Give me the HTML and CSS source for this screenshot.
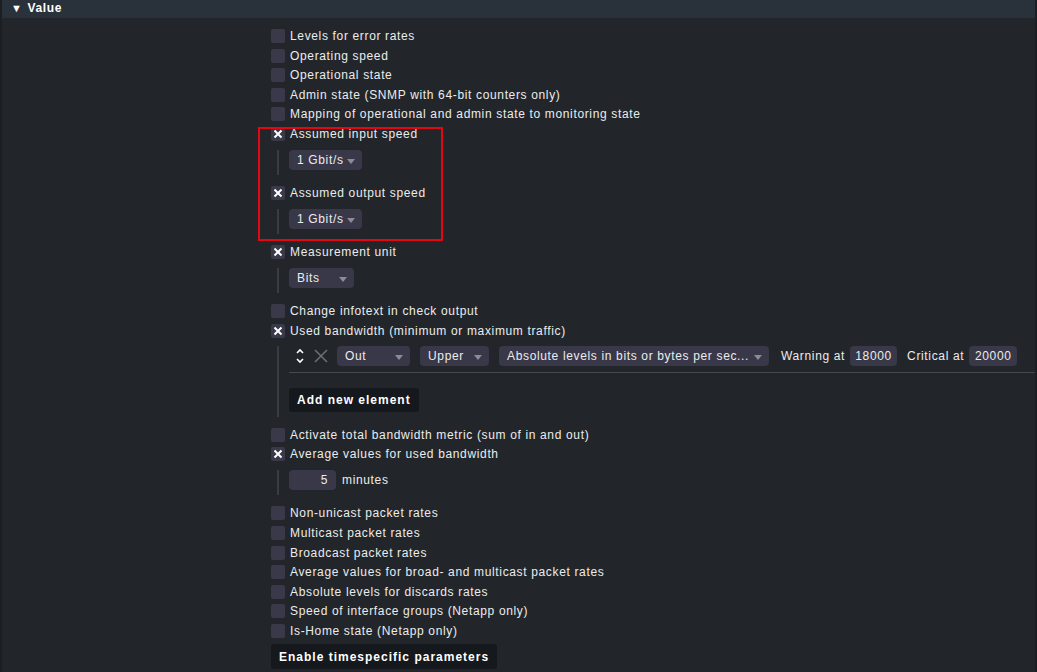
FILE: index.html
```html
<!DOCTYPE html>
<html lang="en">
<head>
<meta charset="UTF-8">
<meta name="viewport" content="width=device-width, initial-scale=1.0">
<title>Value</title>
<link rel="stylesheet" href="styles.css">
</head>
<body>
<div id="page">
    <div class="section-head"><span class="tri">&#9660;</span>Value</div>

    <div id="value-form">
        <div class="row"><span class="cb"></span>Levels for error rates</div>
        <div class="row"><span class="cb"></span>Operating speed</div>
        <div class="row"><span class="cb"></span>Operational state</div>
        <div class="row"><span class="cb"></span>Admin state (SNMP with 64-bit counters only)</div>
        <div class="row"><span class="cb"></span>Mapping of operational and admin state to monitoring state</div>

        <div class="row"><span class="cb on"><svg viewBox="0 0 14 14"><path d="M3.5 3.5 L10.5 10.5 M10.5 3.5 L3.5 10.5"/></svg></span>Assumed input speed</div>
        <div class="sub">
            <div class="sub-inner">
                <div class="select w73">1 Gbit/s<span class="arrow"></span></div>
            </div>
        </div>

        <div class="row"><span class="cb on"><svg viewBox="0 0 14 14"><path d="M3.5 3.5 L10.5 10.5 M10.5 3.5 L3.5 10.5"/></svg></span>Assumed output speed</div>
        <div class="sub">
            <div class="sub-inner">
                <div class="select w73">1 Gbit/s<span class="arrow"></span></div>
            </div>
        </div>

        <div class="row"><span class="cb on"><svg viewBox="0 0 14 14"><path d="M3.5 3.5 L10.5 10.5 M10.5 3.5 L3.5 10.5"/></svg></span>Measurement unit</div>
        <div class="sub">
            <div class="sub-inner">
                <div class="select w65">Bits<span class="arrow"></span></div>
            </div>
        </div>

        <div class="row"><span class="cb"></span>Change infotext in check output</div>
        <div class="row"><span class="cb on"><svg viewBox="0 0 14 14"><path d="M3.5 3.5 L10.5 10.5 M10.5 3.5 L3.5 10.5"/></svg></span>Used bandwidth (minimum or maximum traffic)</div>
        <div class="sub sub-list">
            <div class="sub-inner">
                <div class="list-row">
                    <svg class="updown" viewBox="0 0 10 18"><path d="M2 6 L5 3 L8 6 M2 12 L5 15 L8 12"/></svg>
                    <svg class="del" viewBox="0 0 14 14"><path d="M1 1 L13 13 M13 1 L1 13"/></svg>
                    <div class="select w73">Out<span class="arrow"></span></div>
                    <div class="select w69">Upper<span class="arrow"></span></div>
                    <div class="select w270">Absolute levels in bits or bytes per sec...<span class="arrow"></span></div>
                    <span class="lbl">Warning at</span>
                    <div class="num w47">18000</div>
                    <span class="lbl">Critical at</span>
                    <div class="num w48">20000</div>
                </div>
                <div class="list-line"></div>
                <button class="btn">Add new element</button>
            </div>
        </div>

        <div class="row"><span class="cb"></span>Activate total bandwidth metric (sum of in and out)</div>
        <div class="row"><span class="cb on"><svg viewBox="0 0 14 14"><path d="M3.5 3.5 L10.5 10.5 M10.5 3.5 L3.5 10.5"/></svg></span>Average values for used bandwidth</div>
        <div class="sub">
            <div class="sub-inner">
                <div class="inline"><div class="num w47 right">5</div><span class="unit">minutes</span></div>
            </div>
        </div>

        <div class="row"><span class="cb"></span>Non-unicast packet rates</div>
        <div class="row"><span class="cb"></span>Multicast packet rates</div>
        <div class="row"><span class="cb"></span>Broadcast packet rates</div>
        <div class="row"><span class="cb"></span>Average values for broad- and multicast packet rates</div>
        <div class="row"><span class="cb"></span>Absolute levels for discards rates</div>
        <div class="row"><span class="cb"></span>Speed of interface groups (Netapp only)</div>
        <div class="row"><span class="cb"></span>Is-Home state (Netapp only)</div>

        <button class="btn btn-time">Enable timespecific parameters</button>
    </div>

    <div class="highlight"></div>
</div>
</body>
</html>
```

FILE: styles.css
```css
html, body {
    margin: 0;
    padding: 0;
    background-color: #22262b;
}

body {
    font-family: "Liberation Sans", Arial, sans-serif;
    font-size: 12px;
    letter-spacing: 0.65px;
    color: #ececec;
}

#page {
    position: relative;
    height: 672px;
    overflow: hidden;
    border-left: 2px solid #1b1e22;
    border-right: 2px solid #1b1e22;
}

.section-head {
    height: 18px;
    line-height: 17px;
    background-color: #29313a;
    font-weight: bold;
    color: #fff;
    padding-left: 9px;
}

.section-head .tri {
    font-size: 11px;
    margin-right: 5px;
}

#value-form {
    padding-left: 269px;
    padding-top: 8.2px;
}

.row {
    height: 19.6px;
    display: flex;
    align-items: center;
    white-space: nowrap;
}

.cb {
    width: 14px;
    height: 14px;
    border-radius: 2px;
    background-color: #3a394a;
    margin-right: 5px;
    flex-shrink: 0;
}

.cb svg {
    display: block;
    width: 14px;
    height: 14px;
}

.cb svg path {
    stroke: #fff;
    stroke-width: 2;
    fill: none;
}

.sub {
    margin-left: 6px;
    height: 39.4px;
    padding-top: 6.2px;
    box-sizing: border-box;
}

.sub-inner {
    border-left: 2px solid #393c44;
    padding-left: 10px;
    padding-bottom: 5px;
}

.sub-list {
    height: 84.8px;
}

.select {
    height: 20px;
    line-height: 20px;
    background-color: #383849;
    border-radius: 4px;
    padding-left: 8px;
    box-sizing: border-box;
    position: relative;
    white-space: nowrap;
    overflow: hidden;
}

.arrow {
    position: absolute;
    right: 7px;
    top: 9px;
    width: 0;
    height: 0;
    border-left: 4px solid transparent;
    border-right: 4px solid transparent;
    border-top: 5px solid #8c8c94;
}

.w73 { width: 73px; }
.w65 { width: 65px; }
.w69 { width: 69px; }
.w270 { width: 270px; }
.w47 { width: 47px; }
.w48 { width: 48px; }

.list-row {
    display: flex;
    align-items: center;
    height: 20px;
}

.list-row .select {
    margin-right: 10px;
}

.updown {
    width: 10px;
    height: 18px;
    margin-left: 6px;
    margin-right: 9px;
}

.updown path {
    stroke: #fff;
    stroke-width: 1.6;
    fill: none;
}

.del {
    width: 14px;
    height: 14px;
    margin-right: 9px;
}

.del path {
    stroke: #6b6e73;
    stroke-width: 1.6;
    fill: none;
}

.lbl {
    margin-left: 2px;
    margin-right: 5px;
    white-space: nowrap;
}

.num {
    height: 20px;
    line-height: 20px;
    background-color: #383849;
    border-radius: 4px;
    text-align: center;
    box-sizing: border-box;
    margin-right: 8px;
}

.num.right {
    text-align: right;
    padding-right: 8px;
}

.list-line {
    height: 1px;
    background-color: #45484d;
    margin-top: 5.5px;
    margin-right: -22px;
}

.btn {
    display: block;
    font-family: "Liberation Sans", Arial, sans-serif;
    font-size: 12px;
    font-weight: bold;
    letter-spacing: 1px;
    color: #fff;
    background-color: #15181c;
    border: none;
    border-radius: 3px;
    padding: 0 8px;
    height: 24px;
    margin-top: 15.5px;
    cursor: pointer;
}

.btn-time {
    height: 25px;
    margin-top: 3.2px;
}

.inline {
    display: flex;
    align-items: center;
}

.unit {
    margin-left: -2px;
}

.highlight {
    position: absolute;
    left: 256px;
    top: 127px;
    width: 181px;
    height: 110px;
    border: 2px solid #e30613;
}
```
